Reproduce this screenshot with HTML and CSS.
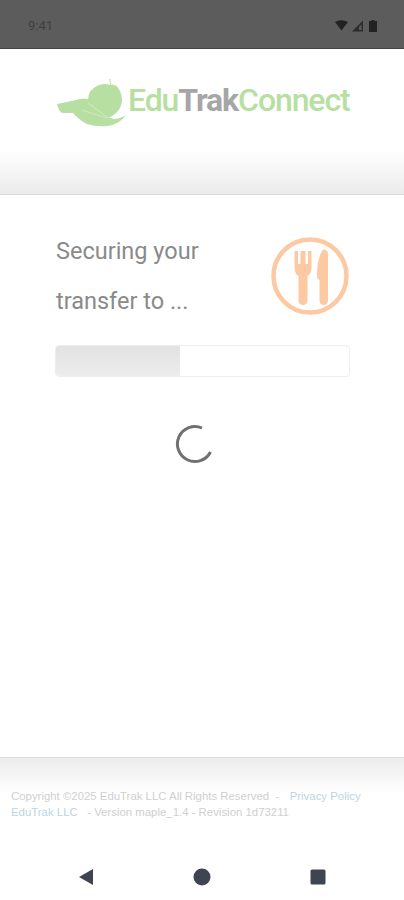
FILE: index.html
```html
<!DOCTYPE html>

<html>
  <head>
    <meta charset="UTF-8">
    <title>EduTrak Connect</title>
    <link rel="stylesheet" href="styles.css">
  </head>
  <body>
    <div class="status-bar">
      <span class="clock">9:41</span>
      <svg class="status-icons" width="46" height="14" viewBox="0 0 46 14">
        <path class="wifi" d="M2 3 Q8.5 -0.5 15 3 L8.5 11.5 Z" />
        <path class="signal" d="M19 12.5 L30 1.5 V12.5 Z M26 11 H28.5 V5.5 L26 8 Z" fill-rule="evenodd" />
        <path class="wifi" d="M38.5 2 V1 H41.5 V2 H44 V13 H36 V2 Z" />
      </svg>
    </div>

    <header class="app-header">
      <svg class="leaf-logo" width="72" height="50" viewBox="57 78 72 50">
        <path class="stem" d="M110 79 L110.5 85" />
        <path class="green" d="M57 104 L76 100 Q84 97 90 100 L107 117 L114 119 Q120 119 126 115 Q120 124 108 126 Q96 127 87 124 Q79 120 73 113 L62 113 L59 110 Z" />
        <path class="green" d="M88 100 Q88 89 99 85 Q105 83 110 85 Q116 83 120 91 Q124 100 120 108 Q116 115 108 118 L104 116 L92 107 Q88 104 88 100 Z" />
        <path class="cut" d="M82 110 L97 115 L108 118 M88 103 L107 117" />
      </svg>
      <div class="wordmark"><span class="green-text">Edu</span><span class="grey-text">Trak</span><span class="green-text">Connect</span></div>
    </header>

    <main class="content">
      <div class="intro">
        <p class="intro-text">Securing your<br>transfer to ...</p>
        <svg class="meal-icon" width="80" height="80" viewBox="0 0 80 80">
          <circle class="ring" cx="40" cy="40" r="36.5" />
          <path class="meal" d="M24.5 15 H28 V28 H30.5 V15 H35.5 V28 H38 V15 H41.5 V30 Q41.5 38 37.5 40 V64 Q37.5 69 33 69 Q28.5 69 28.5 64 V40 Q24.5 38 24.5 30 Z" />
          <path class="meal" d="M53 13.5 Q58 13.5 58 18 V64 Q58 69 53.5 69 Q49.5 69 49.5 64 V44 Q47 43 47 40 Q47 22 53 13.5 Z" />
        </svg>
      </div>
      <div class="progress">
        <div class="progress-fill"></div>
      </div>
      <svg class="spinner" width="40" height="40" viewBox="0 0 40 40">
        <path d="M27 4 A17.5 17.5 0 1 0 35.5 28" />
      </svg>
    </main>

    <footer class="app-footer">
      <p>Copyright ©2025 EduTrak LLC All Rights Reserved &nbsp;- &nbsp; <a href="#">Privacy Policy</a></p>
      <p><a href="#">EduTrak LLC</a> &nbsp; - Version maple_1.4 - Revision 1d73211</p>
    </footer>

    <nav class="nav-bar">
      <svg width="16" height="18" viewBox="0 0 16 18"><path d="M1 9 L15 1 V17 Z" /></svg>
      <svg width="18" height="18" viewBox="0 0 18 18"><circle cx="9" cy="9" r="8.5" /></svg>
      <svg width="16" height="16" viewBox="0 0 16 16"><rect x="0.5" y="0.5" width="15" height="15" rx="1.5" /></svg>
    </nav>
  </body>
</html>
```

FILE: styles.css
```css
body {
  margin: 0;
  height: 900px;
  display: flex;
  flex-direction: column;
  font-family: Roboto, sans-serif;
  background: white;
  overflow: hidden;
}

p {
  margin: 0;
}

a {
  color: #bcd5e4;
  text-decoration: none;
  margin-left: 1px;
}

.status-bar {
  height: 48px;
  flex: none;
  display: flex;
  align-items: center;
  justify-content: space-between;
  padding: 0 25px 0 28px;
  background: #5c5c5c;
  border-bottom: 1px solid #444;
}

.clock {
  font-size: 13px;
  color: #3f3f3f;
  margin-top: 2px;
}

.status-icons {
  margin-top: 4px;
}

.wifi {
  fill: #222;
}

.signal {
  fill: #2c2c2c;
}

.app-header {
  height: 146px;
  flex: none;
  box-sizing: border-box;
  display: flex;
  align-items: flex-start;
  gap: 0;
  padding: 29px 0 0 57px;
  background: linear-gradient(to bottom, white 70%, #ebebeb 100%);
  border-bottom: 1px solid #dcdcdc;
}

.green {
  fill: #b7dfa1;
}

.stem {
  stroke: #c5d8ba;
  stroke-width: 1;
  fill: none;
}

.cut {
  stroke: #d8eecb;
  stroke-width: 0.7;
  fill: none;
}

.wordmark {
  font-size: 32px;
  font-weight: 500;
  line-height: 44px;
  letter-spacing: -1.1px;
  margin-left: -1px;
  white-space: nowrap;
}

.green-text {
  color: #b7dfa1;
}

.grey-text {
  color: #a6a6a6;
  font-weight: 700;
}

.content {
  flex: 1;
  display: flex;
  flex-direction: column;
  padding: 31px 54px 0 55px;
}

.intro {
  display: flex;
  justify-content: space-between;
  align-items: flex-start;
}

.intro-text {
  font-size: 23.5px;
  line-height: 50px;
  color: #8a8a8a;
  padding-left: 1px;
}

.meal-icon {
  margin: 10px 0 0 0;
}

.ring {
  fill: none;
  stroke: #fcc9a2;
  stroke-width: 4.5;
}

.meal {
  fill: #fcc9a2;
}

.progress {
  height: 32px;
  box-sizing: border-box;
  margin-top: 19px;
  border: 1px solid #eeeeee;
  border-radius: 4px;
  overflow: hidden;
}

.progress-fill {
  width: 42.4%;
  height: 100%;
  background: linear-gradient(to bottom, #e2e2e2, #ececec);
}

.spinner {
  align-self: center;
  margin: 47px 0 0 -16px;
}

.spinner path {
  fill: none;
  stroke: #707070;
  stroke-width: 3;
}

.app-footer {
  height: 100px;
  flex: none;
  box-sizing: border-box;
  padding: 30px 0 0 11px;
  font-family: "Liberation Sans", sans-serif;
  font-size: 11.4px;
  line-height: 16px;
  color: #cfcfcf;
  background: linear-gradient(to bottom, #ececec, white 35%);
  border-top: 1px solid #dedede;
}

.app-footer p:last-child a {
  margin-left: 0;
}

.nav-bar {
  height: 43px;
  flex: none;
  display: flex;
  align-items: center;
  justify-content: space-between;
  box-sizing: border-box;
  padding: 0 78px 3px 78px;
}

.nav-bar svg {
  fill: #3e4451;
}
```
